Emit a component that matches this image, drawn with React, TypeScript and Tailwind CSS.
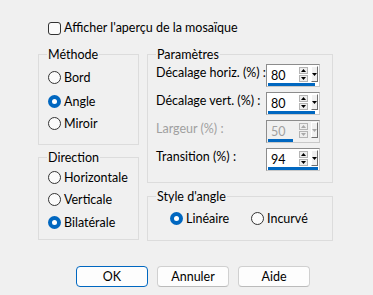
import React from "react";

function Radio({ checked, label, className = "" }: { checked?: boolean; label: string; className?: string }) {
  return (
    <div className={"flex items-center h-[13px] gap-[3px] " + className}>
      {checked ? (
        <div className="w-[13px] h-[13px] rounded-full bg-[#0067c0] flex items-center justify-center shrink-0">
          <div className="w-[5px] h-[5px] rounded-full bg-white" />
        </div>
      ) : (
        <div className="w-[13px] h-[13px] rounded-full border border-[#333333] bg-[#fbfbfb] shrink-0" />
      )}
      <span className="leading-[16px] whitespace-nowrap">{label}</span>
    </div>
  );
}

function GroupBox({ title, className = "", children }: { title: string; className?: string; children?: React.ReactNode }) {
  return (
    <div className={"border border-[#dcdcdc] flex flex-col " + className}>
      <span className="self-start ml-[8px] px-[1px] -mt-[8px] bg-[#f0f0f0] leading-[16px] whitespace-nowrap">{title}</span>
      {children}
    </div>
  );
}

function Tri({ up, disabled }: { up?: boolean; disabled?: boolean }) {
  const c = disabled ? "#a8a8a8" : "#000000";
  return (
    <svg width="5" height="3" viewBox="0 0 5 3">
      {up ? <path d="M2.5 0 L5 3 L0 3 Z" fill={c} /> : <path d="M0 0 L5 0 L2.5 3 Z" fill={c} />}
    </svg>
  );
}

function Spin({ value, bar, disabled }: { value: string; bar: number; disabled?: boolean }) {
  return (
    <div
      className={
        "relative w-[54px] h-[23px] border border-t-[#8c8c8c] border-l-[#8c8c8c] border-r-[#c8c8c8] border-b-[#c8c8c8] flex items-start " +
        (disabled ? "bg-[#f0f0f0]" : "bg-white")
      }
    >
      <span className={"w-[32px] pl-[4px] pt-[3px] leading-[16px] " + (disabled ? "text-[#a0a0a0]" : "text-black")}>{value}</span>
      <div className="flex flex-col mt-[2px] w-[9px]">
        <div className="h-[7px] border border-[#b4b4b4] bg-[#eeeeee] flex items-center justify-center">
          <Tri up disabled={disabled} />
        </div>
        <div className="h-[7px] mt-[1px] border border-[#b4b4b4] bg-[#eeeeee] flex items-center justify-center">
          <Tri disabled={disabled} />
        </div>
      </div>
      <div className="ml-[3px] mt-[1px] w-[7px] h-[16px] bg-[#f0f0f0] border border-t-white border-l-white border-r-[#6e6e6e] border-b-[#6e6e6e] flex items-center justify-center">
        <Tri disabled={disabled} />
      </div>
      <div className="absolute left-[1px] bottom-[0px] h-[3px] bg-[#0067c0]" style={{ width: bar }} />
    </div>
  );
}

function ParamRow({ label, value, bar, disabled, className = "" }: { label: string; value: string; bar: number; disabled?: boolean; className?: string }) {
  return (
    <div className={"flex items-start h-[23px] " + className}>
      <span className={"ml-[8px] w-[110px] pt-[1px] leading-[16px] whitespace-nowrap " + (disabled ? "text-[#a0a0a0]" : "text-black")}>
        {label}
      </span>
      <Spin value={value} bar={bar} disabled={disabled} />
    </div>
  );
}

function Btn({ label, primary }: { label: string; primary?: boolean }) {
  return (
    <button
      className={
        "w-[72px] h-[21px] rounded-[4px] bg-[#fdfdfd] leading-[16px] text-black flex items-center justify-center border " +
        (primary ? "border-[#0067c0]" : "border-[#d0d0d0] border-b-[#bbbbbb]")
      }
    >
      {label}
    </button>
  );
}

export default function App() {
  return (
    <div className="w-[373px] h-[295px] bg-[#f0f0f0] text-[12.5px] leading-[16px] text-black font-['Lato',sans-serif] pt-[20px] flex flex-col overflow-hidden">
      <div className="flex items-center ml-[48px] h-[16px] gap-[3px]">
        <div className="w-[13px] h-[13px] rounded-[3px] border border-[#333333] bg-[#fbfbfb]" />
        <span className="whitespace-nowrap">Afficher l'aperçu de la mosaïque</span>
      </div>

      <div className="flex ml-[38px] mt-[18px] gap-[8px]">
        <div className="flex flex-col w-[101px]">
          <GroupBox title="Méthode" className="h-[91px]">
            <Radio label="Bord" className="ml-[9px] mt-[8px]" />
            <Radio label="Angle" checked className="ml-[9px] mt-[11px]" />
            <Radio label="Miroir" className="ml-[9px] mt-[9px]" />
          </GroupBox>
          <GroupBox title="Direction" className="h-[83px] mt-[12px]">
            <Radio label="Horizontale" className="ml-[9px] mt-[5px]" />
            <Radio label="Verticale" className="ml-[9px] mt-[9px]" />
            <Radio label="Bilatérale" checked className="ml-[9px] mt-[10px]" />
          </GroupBox>
        </div>

        <div className="flex flex-col w-[186px]">
          <GroupBox title="Paramètres" className="h-[129px]">
            <ParamRow label="Décalage horiz. (%) :" value="80" bar={47} className="mt-[1px]" />
            <ParamRow label="Décalage vert. (%) :" value="80" bar={47} className="mt-[5px]" />
            <ParamRow label="Largeur (%) :" value="50" bar={25} disabled className="mt-[5px]" />
            <ParamRow label="Transition (%) :" value="94" bar={50} className="mt-[5px]" />
          </GroupBox>
          <GroupBox title="Style d'angle" className="h-[45px] mt-[13px]">
            <div className="flex mt-[7px] ml-[22px]">
              <Radio label="Linéaire" checked className="w-[81px]" />
              <Radio label="Incurvé" />
            </div>
          </GroupBox>
        </div>
      </div>

      <div className="flex ml-[76px] mt-[25px] gap-[9px]">
        <Btn label="OK" primary />
        <Btn label="Annuler" />
        <Btn label="Aide" />
      </div>
    </div>
  );
}
